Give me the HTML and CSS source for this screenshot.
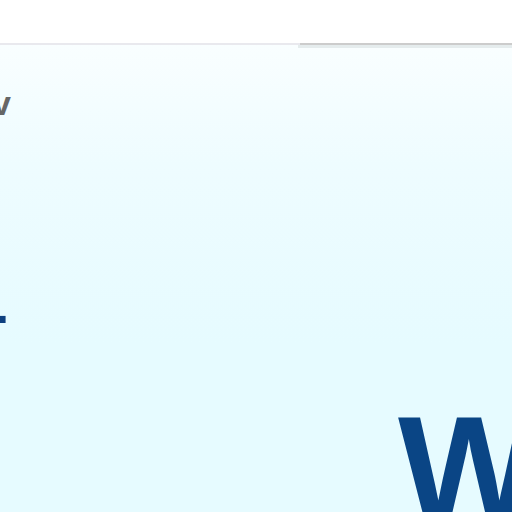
FILE: index.html
```html
<!DOCTYPE html>
<html>
<head>
<meta charset="utf-8">
<link rel="stylesheet" href="styles.css">
</head>
<body>
<header class="top"></header>
<main class="hero">
  <div class="line-v"><span class="glyph-v">v</span></div>
  <div class="line-dash"><span class="glyph-dash">-</span></div>
  <h1 class="big">We</h1>
</main>
</body>
</html>
```
FILE: styles.css
```css
html, body {
  margin: 0;
  padding: 0;
  width: 512px;
  height: 512px;
  overflow: hidden;
  font-family: "Liberation Sans", Arial, sans-serif;
}
.top {
  height: 43px;
  background: #ffffff;
}
.hero {
  position: relative;
  height: 467px;
  border-top: 2px solid #e9e9ee;
  border-image: linear-gradient(to right, #e9e9ee 0, #e9e9ee 300px, #cccccc 300px, #cccccc 100%) 1;
  border-left: 0;
  border-right: 0;
  border-bottom: 0;
  background: linear-gradient(#f9feff 0px, #eefcff 120px, #e6fbff 300px, #e6fbff 100%);
  overflow: hidden;
}
.hero::after {
  content: "";
  position: absolute;
  top: 0;
  left: 298px;
  right: 0;
  height: 3px;
  background: #e5eced;
}
.line-v {
  height: 40px;
  margin-top: 38px;
  line-height: 40px;
}
.glyph-v {
  display: inline-block;
  margin-left: -8px;
  font-size: 34px;
  font-weight: bold;
  color: #666666;
}
.line-dash {
  margin-top: 172px;
  height: 40px;
  line-height: 40px;
}
.glyph-dash {
  display: inline-block;
  margin-left: -12px;
  font-size: 60px;
  font-weight: bold;
  color: #0d4080;
}
.big {
  margin: 59px 0 0 398px;
  font-size: 150px;
  line-height: 150px;
  font-weight: bold;
  color: #0a4585;
  white-space: nowrap;
}
```
